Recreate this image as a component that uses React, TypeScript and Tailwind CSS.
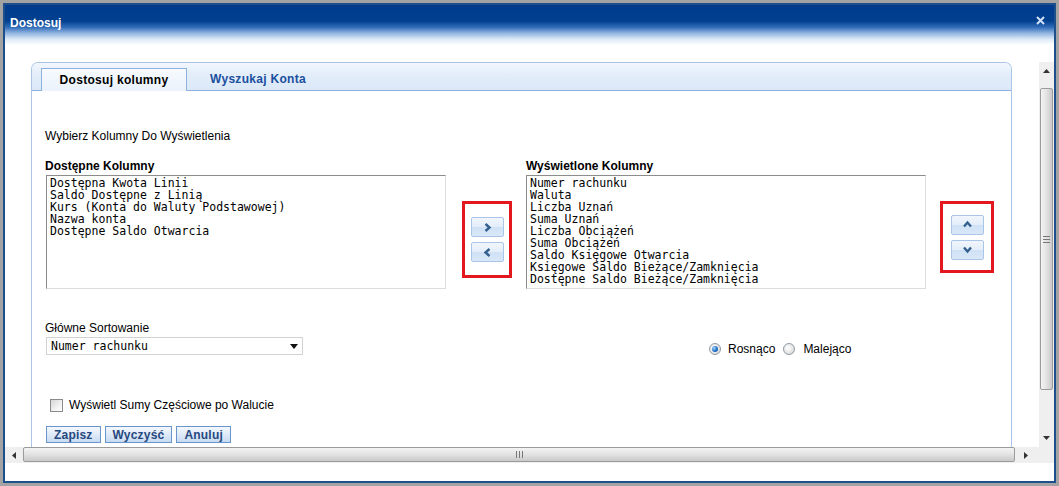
import React from 'react';

const sans = "font-['Liberation_Sans',Arial,sans-serif]";
const mono = "font-['DejaVu_Sans_Mono','Liberation_Mono',monospace]";

const available = [
    'Dostępna Kwota Linii',
    'Saldo Dostępne z Linią',
    'Kurs (Konta do Waluty Podstawowej)',
    'Nazwa konta',
    'Dostępne Saldo Otwarcia',
];

const displayed = [
    'Numer rachunku',
    'Waluta',
    'Liczba Uznań',
    'Suma Uznań',
    'Liczba Obciążeń',
    'Suma Obciążeń',
    'Saldo Księgowe Otwarcia',
    'Księgowe Saldo Bieżące/Zamknięcia',
    'Dostępne Saldo Bieżące/Zamknięcia',
];

function Chevron({ dir }: { dir: 'left' | 'right' | 'up' | 'down' }) {
    const points = {
        right: '2.5,1 6.5,4.5 2.5,8',
        left: '6.5,1 2.5,4.5 6.5,8',
        up: '1,6.5 4.5,2.5 8,6.5',
        down: '1,2.5 4.5,6.5 8,2.5',
    }[dir];
    return (
        <svg width="9" height="9" viewBox="0 0 9 9">
            <polyline points={points} fill="none" stroke="#33608e" strokeWidth="2.4" strokeLinejoin="miter" />
        </svg>
    );
}

const MoveButton: React.FC<{ dir: 'left' | 'right' | 'up' | 'down' }> = ({ dir }) => (
    <div className="w-[33px] h-[20px] flex items-center justify-center rounded-[2px] border border-[#a9c5e8] bg-[linear-gradient(to_bottom,#f1f6fc_0%,#e3edf9_50%,#cfe1f6_51%,#d9e8f8_100%)]">
        <Chevron dir={dir} />
    </div>
);

const ListBox: React.FC<{ items: string[] }> = ({ items }) => (
    <div
        className={`w-[400px] h-[114px] border border-[#dcdcdc] border-l-[#8c8c8c] border-t-[#8c8c8c] bg-white pl-[3px] pt-[1px] text-[11.5px] leading-[12px] text-black ${mono}`}
    >
        {items.map((it) => (
            <div key={it} className="whitespace-pre">
                {it}
            </div>
        ))}
    </div>
);

const ActionButton: React.FC<{ label: string }> = ({ label }) => (
    <div className="h-[17px] px-[7px] flex items-center border border-[#6a95cb] bg-[linear-gradient(to_bottom,#f4f8fd_0%,#dfeaf8_50%,#c8dbf2_100%)] text-[12px] font-bold text-[#26487f] tracking-[0.2px]">
        {label}
    </div>
);

function Radio({ checked }: { checked?: boolean }) {
    return (
        <div className="w-[12px] h-[12px] rounded-full border border-[#8f99a6] bg-[radial-gradient(circle_at_40%_40%,#ffffff_0%,#e4e4e4_60%,#c8c8c8_100%)] flex items-center justify-center">
            {checked && (
                <div className="w-[6px] h-[6px] rounded-full bg-[radial-gradient(circle_at_35%_35%,#a6d8ff_0%,#1f6fc6_55%,#0b3f86_100%)]" />
            )}
        </div>
    );
}

export default function App() {
    return (
        <div className={`w-[1059px] h-[486px] bg-[#a3a3a3] pt-[3px] px-[3px] ${sans}`}>
            <div className="w-[1053px] h-[480px] border-2 border-[#1d4f8b] bg-white flex flex-col overflow-hidden">
                {/* title bar */}
                <div className="h-[57px] shrink-0">
                    <div className="h-[40px] flex items-start justify-between pt-[11px] pl-[5px] pr-[9px] bg-[linear-gradient(to_bottom,#003b8d_0%,#02408f_40%,#2d69b6_55%,#8fb3e0_70%,#dbe8f6_85%,#ffffff_100%)]">
                        <div className="text-[12px] leading-[14px] font-bold text-white">Dostosuj</div>
                        <svg width="9" height="9" viewBox="0 0 9 9">
                            <path d="M1 1 L8 8 M8 1 L1 8" stroke="#d2e2f6" strokeWidth="2" />
                        </svg>
                    </div>
                </div>

                {/* scroll area */}
                <div className="h-[385px] flex shrink-0">
                    <div className="flex-1 overflow-hidden pl-[26px]">
                        <div className="w-[981px] h-[400px] border border-b-0 border-[#a9c5e7] rounded-t-[7px] overflow-hidden">
                            {/* tabs */}
                            <div className="h-[28px] flex items-end pl-[9px] border-b border-[#8db2dd] bg-[linear-gradient(to_bottom,#f2f7fd_0%,#e4eefa_40%,#dbe8f8_100%)]">
                                <div className="w-[146px] h-[23px] -mb-px flex items-center justify-center border border-b-0 border-[#8db2dd] bg-[linear-gradient(to_bottom,#f7fafe_0%,#eaf2fb_100%)] text-[12px] font-bold text-black tracking-[0.3px]">
                                    Dostosuj kolumny
                                </div>
                                <div className="h-[22px] ml-[23px] flex items-center text-[12px] font-bold text-[#1a4f9e] tracking-[0.3px]">
                                    Wyszukaj Konta
                                </div>
                            </div>

                            {/* body */}
                            <div className="pl-[13px] pt-[38px] text-[12px] leading-[14px] text-black">
                                <div>Wybierz Kolumny Do Wyświetlenia</div>

                                <div className="flex items-start mt-[16px]">
                                    <div className="w-[401px]">
                                        <div className="font-bold mb-[2px]">Dostępne Kolumny</div>
                                        <div className="ml-px">
                                            <ListBox items={available} />
                                        </div>
                                    </div>
                                    <div className="ml-[16px] mt-[42px] w-[50px] h-[77px] border-[3px] border-[#e3171e] flex flex-col items-center justify-center gap-[5px]">
                                        <MoveButton dir="right" />
                                        <MoveButton dir="left" />
                                    </div>
                                    <div className="ml-[14px] w-[400px]">
                                        <div className="font-bold mb-[2px]">Wyświetlone Kolumny</div>
                                        <ListBox items={displayed} />
                                    </div>
                                    <div className="ml-[14px] mt-[42px] w-[54px] h-[72px] border-[3px] border-[#e3171e] flex flex-col items-center justify-center gap-[5px]">
                                        <MoveButton dir="up" />
                                        <MoveButton dir="down" />
                                    </div>
                                </div>

                                <div className="flex items-end mt-[32px]">
                                    <div className="pl-px">
                                        <div className="-ml-px mb-[2px]">Główne Sortowanie</div>
                                        <div className={`w-[257px] h-[18px] border border-[#d2d2d2] flex items-center justify-between pl-[4px] pr-[4px] text-[11.5px] ${mono}`}>
                                            <span>Numer rachunku</span>
                                            <svg width="8" height="5" viewBox="0 0 8 5">
                                                <path d="M0 0 L8 0 L4 5 Z" fill="#111" />
                                            </svg>
                                        </div>
                                    </div>
                                    <div className="ml-[406px] mb-[-1px] flex items-center h-[14px]">
                                        <Radio checked />
                                        <span className="ml-[7px]">Rosnąco</span>
                                        <div className="ml-[8px]">
                                            <Radio />
                                        </div>
                                        <span className="ml-[8px]">Malejąco</span>
                                    </div>
                                </div>

                                <div className="flex items-center mt-[43px] ml-[5px]">
                                    <div className="w-[13px] h-[13px] border border-[#8a8a8a] bg-[linear-gradient(135deg,#d6d6d6_0%,#f2f2f2_60%,#ffffff_100%)]" />
                                    <span className="ml-[6px]">Wyświetl Sumy Częściowe po Walucie</span>
                                </div>

                                <div className="flex gap-[4px] mt-[14px] ml-px">
                                    <ActionButton label="Zapisz" />
                                    <ActionButton label="Wyczyść" />
                                    <ActionButton label="Anuluj" />
                                </div>
                            </div>
                        </div>
                    </div>

                    {/* vertical scrollbar */}
                    <div className="w-[15px] bg-[#efefef] flex flex-col items-center">
                        <div className="h-[17px] flex items-center justify-center">
                            <svg width="7" height="4" viewBox="0 0 7 4">
                                <path d="M0 4 L3.5 0 L7 4 Z" fill="#333" />
                            </svg>
                        </div>
                        <div className="mt-[9px] w-[13px] h-[302px] rounded-[2px] border border-[#9b9b9b] bg-[linear-gradient(to_right,#f4f4f4_0%,#e2e2e2_50%,#c9c9c9_100%)] flex flex-col items-center justify-center gap-[2px]">
                            <div className="w-[7px] h-px bg-[#777]" />
                            <div className="w-[7px] h-px bg-[#777]" />
                            <div className="w-[7px] h-px bg-[#777]" />
                        </div>
                        <div className="flex-1 flex items-end pb-[7px]">
                            <svg width="7" height="4" viewBox="0 0 7 4">
                                <path d="M0 0 L7 0 L3.5 4 Z" fill="#333" />
                            </svg>
                        </div>
                    </div>
                </div>

                {/* horizontal scrollbar */}
                <div className="h-[16px] shrink-0 flex bg-[#efefef]">
                    <div className="w-[18px] flex items-center justify-center">
                        <svg width="4" height="7" viewBox="0 0 4 7">
                            <path d="M4 0 L0 3.5 L4 7 Z" fill="#333" />
                        </svg>
                    </div>
                    <div className="w-[992px] h-[15px] rounded-[2px] border border-[#9b9b9b] bg-[linear-gradient(to_bottom,#f4f4f4_0%,#e2e2e2_50%,#c9c9c9_100%)] flex items-center justify-center gap-[2px]">
                        <div className="w-px h-[7px] bg-[#777]" />
                        <div className="w-px h-[7px] bg-[#777]" />
                        <div className="w-px h-[7px] bg-[#777]" />
                    </div>
                    <div className="w-[22px] flex items-center justify-center">
                        <svg width="4" height="7" viewBox="0 0 4 7">
                            <path d="M0 0 L4 3.5 L0 7 Z" fill="#333" />
                        </svg>
                    </div>
                    <div className="flex-1 bg-[#efefef]" />
                </div>

                <div className="flex-1 bg-white" />
            </div>
        </div>
    );
}
